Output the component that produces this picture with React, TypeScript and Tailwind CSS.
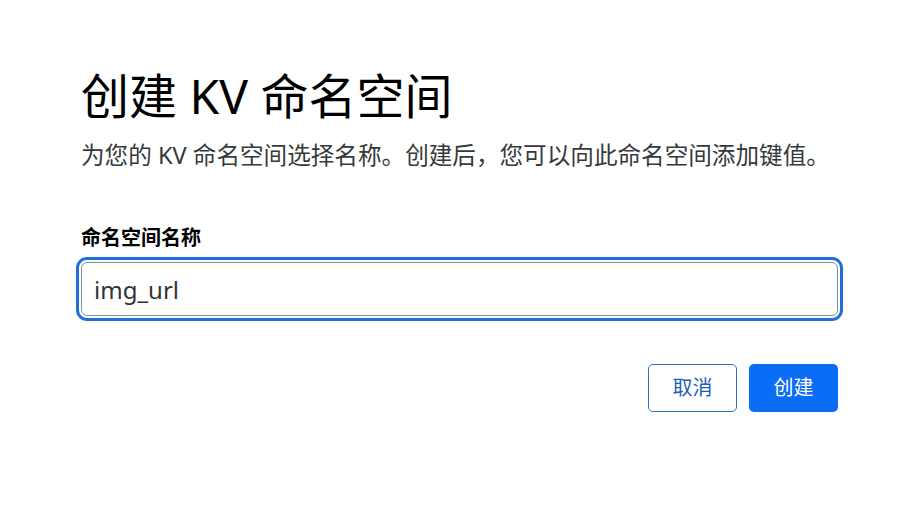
export default function App() {
  const font = { fontFamily: '"Noto Sans", "Noto Sans CJK SC", sans-serif' };
  return (
    <div className="min-h-[507px] w-[922px] bg-white" style={font}>
      <div className="pl-[81px] pr-[84px] pt-[64px]">
        <h1 className="text-[48px] leading-[64px] text-black font-normal">创建 KV 命名空间</h1>
        <p className="mt-[11px] whitespace-nowrap text-[23.6px] leading-[32px] text-[#36393a]">
          为您的 KV 命名空间选择名称。创建后，您可以向此命名空间添加键值。
        </p>
        <label className="mt-[53px] block text-[20px] leading-[28px] font-bold text-black">命名空间名称</label>
        <input
          readOnly
          value="img_url"
          className="mt-[10px] block h-[54px] w-full rounded-[6px] border border-[#7d8fa8] bg-white px-[12px] text-[24px] text-[#333] outline-3 outline-offset-2 outline-solid outline-[#1f6fd6]"
          style={font}
        />
        <div className="mt-[48px] flex justify-end gap-[12px]">
          <button className="h-[48px] w-[89px] rounded-[5px] border border-[#2f6fc2] bg-white text-[20px] text-[#1d5fb5]">取消</button>
          <button className="h-[48px] w-[89px] rounded-[5px] bg-[#0b6cf5] text-[20px] text-white">创建</button>
        </div>
      </div>
    </div>
  );
}
